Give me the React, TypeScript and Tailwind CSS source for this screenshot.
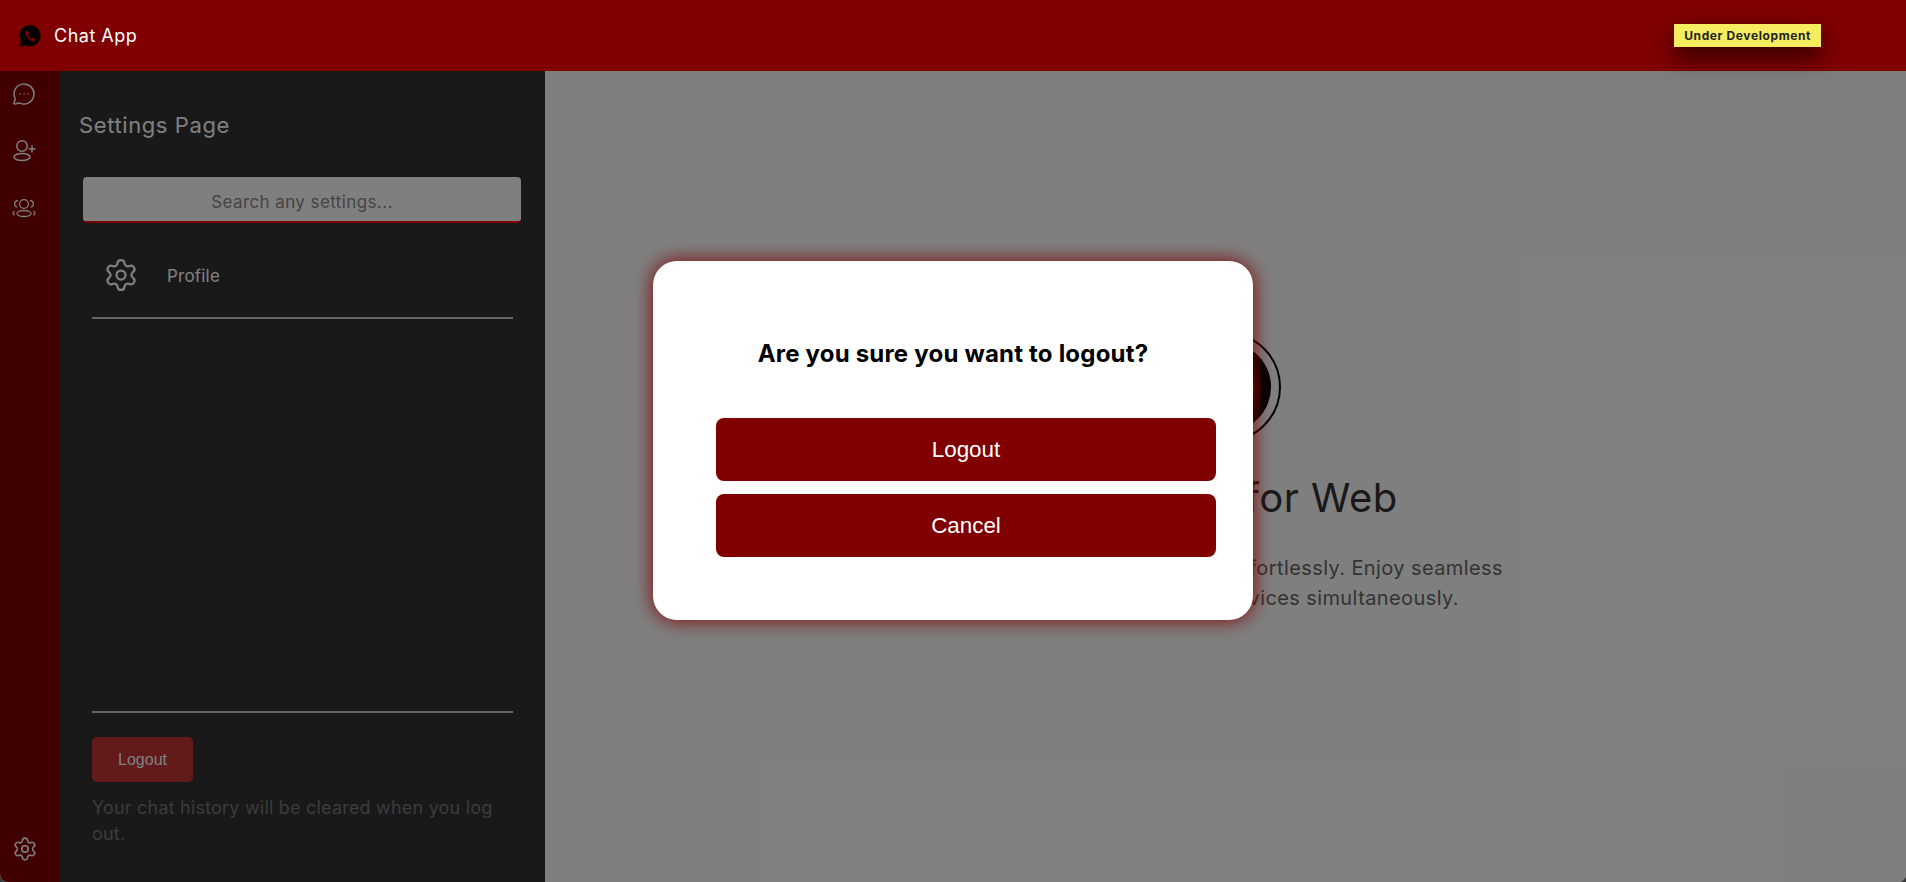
import { Settings, MessageCircleMore } from 'lucide-react';

function Logo() {
  return (
    <svg width="24" height="24" viewBox="0 0 24 24">
      <path d="M12 1.2a10.6 10.6 0 0 0-9 16.2L1.6 22.8l5.6-1.5A10.6 10.6 0 1 0 12 1.2z" fill="#000" stroke="#400000" strokeWidth="0.8" />
      <path d="M8.4 6.6c-.6.4-1.2 1.3-1 2.6.4 2.9 3.8 6.9 6.9 8 1.3.4 2.3-.1 2.8-.7.4-.5.4-1.1.3-1.4l-2.2-1.4c-.3-.2-.7-.1-.9.1l-.8.9c-1.5-.6-3-2.3-3.5-3.8l.9-.7c.3-.2.3-.6.2-.9L9.5 6.8c-.2-.4-.7-.4-1.1-.2z" fill="#800000" />
    </svg>
  );
}

function AddUserIcon() {
  return (
    <svg width="24" height="24" viewBox="0 0 24 24" fill="none" stroke="currentColor" strokeWidth="1.5" strokeLinecap="round">
      <circle cx="10" cy="7" r="5.2" />
      <ellipse cx="10" cy="18" rx="8" ry="3.6" />
      <path d="M20 7v6M17 10h6" />
    </svg>
  );
}

function GroupIcon() {
  return (
    <svg width="24" height="24" viewBox="0 0 24 24" fill="none" stroke="currentColor" strokeWidth="1.3" strokeLinecap="round">
      <circle cx="12" cy="8" r="4.4" />
      <ellipse cx="12" cy="17.5" rx="7" ry="3" />
      <path d="M5.5 4.5a3.4 3.4 0 0 0-.8 6.5M18.500 4.500a3.400 3.400 0 0 1 .8 6.500" />
      <path d="M2.200 15.500c-1.500 1-1.500 2.500 0 3.500M21.800 15.500c1.500 1 1.500 2.500 0 3.500" />
    </svg>
  );
}

export default function App() {
  return (
    <div className="h-[882px] w-[1906px] bg-[#3a3a3a]">
      <div className="relative h-full w-full overflow-hidden rounded-b-[8px] bg-white font-['Inter',sans-serif]">
        <header className="relative z-20 flex h-[71px] items-center justify-between bg-[#800000] pl-[18px] pr-[85px]">
          <div className="flex items-center gap-[12px]">
            <Logo />
            <span className="text-[18px] tracking-[0.5px] text-white">Chat App</span>
          </div>
          <span className="mt-[-1px] bg-[#f5ec5f] px-[10px] py-[3px] text-[12px] font-bold leading-[17px] tracking-[0.6px] text-[#222] shadow-[0_10px_25px_rgba(0,0,0,0.65)]">
            Under Development
          </span>
        </header>

        <div className="flex h-[811px]">
          <nav className="flex w-[60px] shrink-0 flex-col justify-between bg-[#800000] pb-[20px] pl-[12px] pt-[11px] text-white">
            <div className="flex flex-col gap-[33px]">
              <MessageCircleMore size={24} strokeWidth={1.5} />
              <AddUserIcon />
              <GroupIcon />
            </div>
            <Settings size={26} strokeWidth={1.5} />
          </nav>

          <aside className="flex w-[485px] shrink-0 flex-col bg-[#333] pb-[35px]">
            <h2 className="ml-[19px] mt-[38px] text-[22px] leading-[32px] tracking-[0.6px] text-white">Settings Page</h2>
            <input
              placeholder="Search any settings..."
              className="ml-[23px] mt-[36px] h-[46px] w-[438px] rounded-[4px] border-b-2 border-[#ff0000] bg-white pt-[6px] text-center text-[17px] tracking-[0.4px] outline-none placeholder:text-[#888]"
            />
            <div className="ml-[32px] mt-[10px] flex h-[86px] w-[421px] items-center gap-[28px] border-b-2 border-[#ccc] pl-[11px]">
              <Settings size={36} strokeWidth={1.5} className="text-white" />
              <span className="pt-[3px] text-[17px] tracking-[0.2px] text-white">Profile</span>
            </div>
            <div className="ml-[32px] mt-auto w-[421px] border-t-2 border-[#ccc] pt-[24px]">
              <button className="h-[45px] w-[101px] rounded-[5px] bg-[#c43535] font-['Liberation_Sans',sans-serif] text-[16px] text-white">Logout</button>
              <p className="mt-[13px] text-[18px] leading-[26px] tracking-[0.2px] text-[#777]">Your chat history will be cleared when you log out.</p>
            </div>
          </aside>

          <main className="flex flex-1 flex-col items-center pt-[261px] text-center">
            <div className="flex h-[110px] w-[110px] items-center justify-center rounded-full border-2 border-black">
              <div className="h-[90px] w-[90px] rounded-full bg-[radial-gradient(circle_closest-side,#800000_58%,#000_82%)]" />
            </div>
            <h1 className="mt-[26px] text-[40px] leading-[60px] tracking-[0.5px] text-[#333]">Chat App for Web</h1>
            <p className="mt-[25px] w-[620px] text-[20px] leading-[30px] tracking-[0.4px] text-[#666]">Send and receive messages effortlessly. Enjoy seamless<br />syncing across all your devices simultaneously.</p>
          </main>
        </div>

        {/* logout confirm */}
        <div className="absolute inset-x-0 bottom-0 top-[71px] z-10 bg-black/50" />
        <div className="absolute left-[653px] top-[261px] z-30 flex h-[359px] w-[600px] flex-col rounded-[24px] bg-white pl-[50px] pt-[77px] shadow-[0_0_20px_#800000]">
          <h3 className="w-[500px] text-center text-[24px] font-bold leading-[32px] tracking-[0.2px] text-black">Are you sure you want to logout?</h3>
          <button className="ml-[13px] mt-[48px] h-[63px] w-[500px] rounded-[8px] bg-[#800000] font-['Liberation_Sans',sans-serif] text-[22.4px] text-white">Logout</button>
          <button className="ml-[13px] mt-[13px] h-[63px] w-[500px] rounded-[8px] bg-[#800000] font-['Liberation_Sans',sans-serif] text-[22.4px] text-white">Cancel</button>
        </div>
      </div>
    </div>
  );
}
